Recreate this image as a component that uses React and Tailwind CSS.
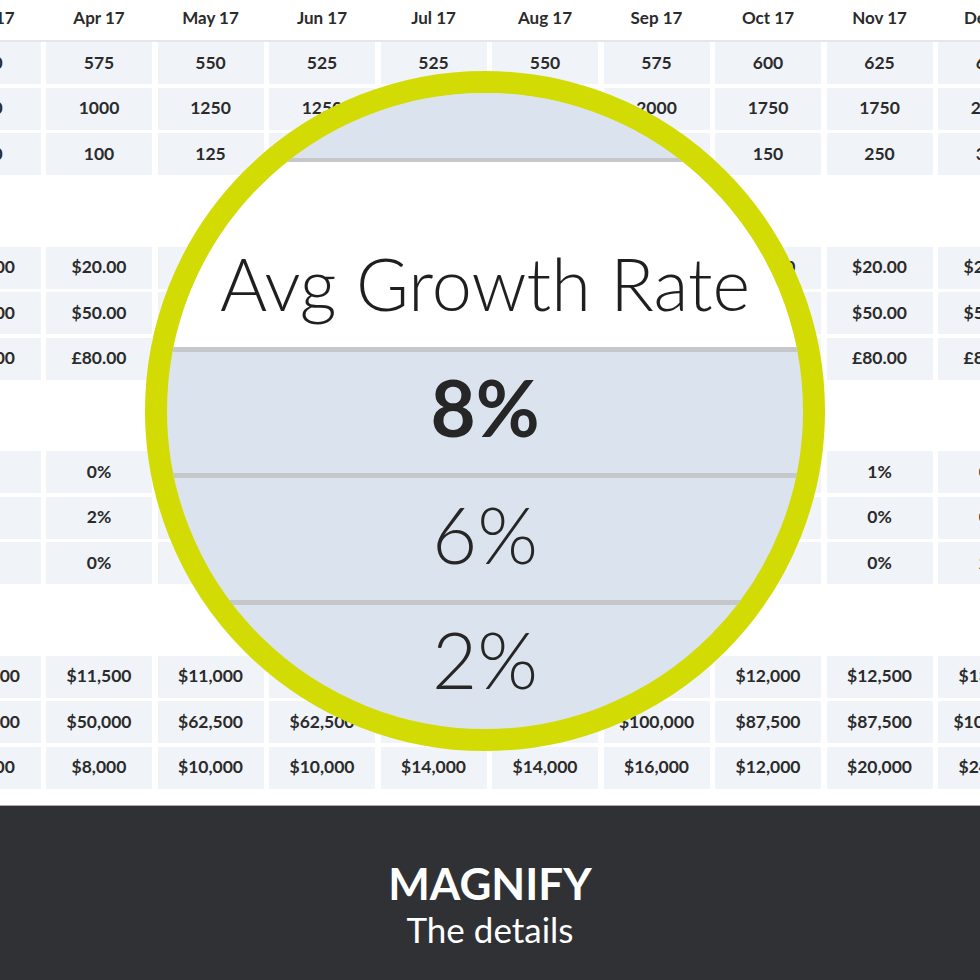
import React from "react";

const months = ["Mar 17", "Apr 17", "May 17", "Jun 17", "Jul 17", "Aug 17", "Sep 17", "Oct 17", "Nov 17", "Dec 17"];

const groups = [
  [
    ["600", "575", "550", "525", "525", "550", "575", "600", "625", "650"],
    ["750", "1000", "1250", "1250", "1500", "1750", "2000", "1750", "1750", "2000"],
    ["100", "100", "125", "125", "150", "150", "200", "150", "250", "300"],
  ],
  [
    Array(10).fill("$20.00"),
    Array(10).fill("$50.00"),
    Array(10).fill("£80.00"),
  ],
  [
    ["0%", "0%", "1%", "0%", "2%", "1%", "0%", "1%", "1%", "0%"],
    ["2%", "2%", "0%", "1%", "0%", "2%", "0%", "1%", "0%", "0%"],
    ["1%", "0%", "0%", "0%", "1%", "0%", "1%", "0%", "0%", "2%"],
  ],
  [
    ["$12,000", "$11,500", "$11,000", "$10,500", "$11,000", "$11,500", "$12,500", "$12,000", "$12,500", "$13,000"],
    ["$37,500", "$50,000", "$62,500", "$62,500", "$75,000", "$87,500", "$100,000", "$87,500", "$87,500", "$100,000"],
    ["$8,000", "$8,000", "$10,000", "$10,000", "$14,000", "$14,000", "$16,000", "$12,000", "$20,000", "$24,000"],
  ],
];

export default function App() {
  return (
    <div
      className="relative w-[980px] h-[980px] overflow-hidden bg-white text-[#2b2b2b]"
      style={{ fontFamily: "Lato, 'Open Sans', sans-serif" }}
    >
      <div className="h-[805px] overflow-hidden">
        <div className="ml-[-65.5px] w-[1120px]">
          <div className="grid grid-cols-[repeat(10,106px)] gap-x-[5.5px] h-[42px] border-b-2 border-[#e3e6ea]">
            {months.map((m) => (
              <div key={m} className="flex items-center justify-center text-[17px] font-bold pb-[5px]">
                {m}
              </div>
            ))}
          </div>
          <div className="flex flex-col gap-[71.5px]">
            {groups.map((g, gi) => (
              <div key={gi} className="flex flex-col gap-[3.5px]">
                {g.map((row, ri) => (
                  <div key={ri} className="grid grid-cols-[repeat(10,106px)] gap-x-[5.5px]">
                    {row.map((v, ci) => (
                      <div
                        key={ci}
                        className="h-[42px] flex items-center justify-center bg-[#f0f3f8] text-[17.5px] font-bold"
                      >
                        {v}
                      </div>
                    ))}
                  </div>
                ))}
              </div>
            ))}
          </div>
        </div>
      </div>

      <div className="h-[175px] bg-[#303134] border-t border-[#a9a9a9] flex flex-col items-center pt-[53px] text-white">
        <div className="text-[44px] leading-[48px] font-bold">MAGNIFY</div>
        <div className="text-[35px] leading-[40px] mt-[2px]">The details</div>
      </div>

      <div className="absolute left-[145px] top-[71px] w-[680px] h-[680px] rounded-full border-[22px] border-[#d3db05] overflow-hidden bg-[#dbe3ee]">
        <div className="flex flex-col w-full">
          <div className="h-[65px] bg-[#dbe3ee]" />
          <div className="h-[4px] bg-[#c6c7cb]" />
          <div className="h-[185px] bg-white pt-[85px] text-center text-[72px] leading-none font-light text-[#1f1f1f]">
            Avg Growth Rate
          </div>
          <div className="h-[5px] bg-[#c6c7cb]" />
          <div className="h-[121px] pt-[16px] text-center text-[78px] leading-none font-bold text-[#262626]">
            8%
          </div>
          <div className="h-[5px] bg-[#c6c7cb]" />
          <div className="h-[122px] pt-[17px] text-center text-[78px] leading-none font-light text-[#262626]">
            6%
          </div>
          <div className="h-[5px] bg-[#c6c7cb]" />
          <div className="h-[124px] pt-[15px] text-center text-[78px] leading-none font-light text-[#262626]">
            2%
          </div>
        </div>
      </div>
    </div>
  );
}
